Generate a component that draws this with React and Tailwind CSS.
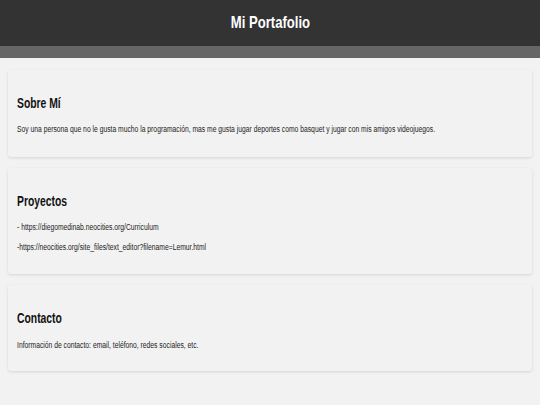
const font = { fontFamily: '"Liberation Sans", Arial, sans-serif' };

function Card({ title, children, className = "" }) {
  return (
    <section
      className={`mx-2 rounded-[3px] bg-[#f2f2f2] px-[9px] pt-[25px] shadow-[0_1px_3px_rgba(0,0,0,0.12)] ${className}`}
    >
      <h2 className="origin-left scale-x-[0.74] whitespace-nowrap text-[14px] font-bold leading-[16px] text-[#111]">
        {title}
      </h2>
      {children}
    </section>
  );
}

function Line({ children, className = "" }) {
  return (
    <p
      className={`origin-left scale-x-[0.795] whitespace-nowrap text-[8.5px] leading-[10px] text-[#222] ${className}`}
    >
      {children}
    </p>
  );
}

export default function App() {
  return (
    <div className="min-h-screen overflow-hidden bg-[#f2f2f2]" style={font}>
      <header className="flex h-[46px] items-center justify-center bg-[#333]">
        <h1 className="scale-x-[0.77] text-[17px] font-bold leading-[20px] text-white">Mi Portafolio</h1>
      </header>
      <nav className="h-[12px] bg-[#666]" />

      <main className="flex flex-col gap-[11px] pt-[12px]">
        <Card title="Sobre Mí" className="pb-[23px]">
          <Line className="mt-[13px]">
            Soy una persona que no le gusta mucho la programación, mas me gusta jugar deportes como basquet y jugar con mis amigos videojuegos.
          </Line>
        </Card>

        <Card title="Proyectos" className="pb-[22px]">
          <div className="mt-[13px] flex flex-col gap-[10px]">
            <Line>- https://diegomedinab.neocities.org/Curriculum</Line>
            <Line>-https://neocities.org/site_files/text_editor?filename=Lemur.html</Line>
          </div>
        </Card>

        <Card title="Contacto" className="pb-[21px]">
          <Line className="mt-[14px]">
            Información de contacto: email, teléfono, redes sociales, etc.
          </Line>
        </Card>
      </main>
    </div>
  );
}
